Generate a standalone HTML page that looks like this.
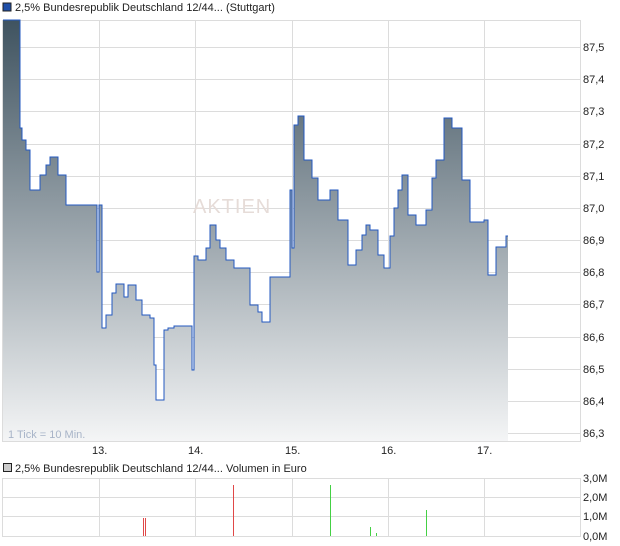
<!DOCTYPE html>
<html><head><meta charset="utf-8"><style>
body{margin:0;background:#fff;width:620px;height:546px;overflow:hidden;font-family:"Liberation Sans",sans-serif}
svg{position:absolute;left:0;top:0}
text{font-family:"Liberation Sans",sans-serif;font-size:11px;fill:#222}
</style></head><body>
<svg width="620" height="546" viewBox="0 0 620 546">
<defs><linearGradient id="g" x1="0" y1="20" x2="0" y2="441" gradientUnits="userSpaceOnUse">
<stop offset="0" stop-color="#3f5360"/><stop offset="1" stop-color="#f4f5f6"/></linearGradient></defs>
<rect x="3" y="3" width="8" height="8" fill="#1f4fa8" stroke="#222" stroke-width="1"/>
<text x="15" y="11">2,5% Bundesrepublik Deutschland 12/44... (Stuttgart)</text>
<g stroke="#dcdcdc" stroke-width="1" fill="none">
<rect x="2.5" y="20.5" width="578" height="421"/>
<path d="M99.5 20V441M195.5 20V441M292.5 20V441M388.5 20V441M484.5 20V441"/>
<path d="M2 47.5H580M2 79.5H580M2 111.5H580M2 144.5H580M2 176.5H580M2 208.5H580M2 240.5H580M2 272.5H580M2 304.5H580M2 337.5H580M2 369.5H580M2 401.5H580M2 433.5H580"/>
</g>
<text x="193" y="213" style="font-size:20px;fill:#e6dcd8;letter-spacing:1px">AKTIEN</text>
<path fill="url(#g)" d="M3 441V20H20V128H22V140H26V150H30V190H40V175H46V165H50V157H58V175H66V205H97V272H99V205H102V328H106V315H112V293H116V284H124V297H128V285H136V300H142V315H150V318H154V365H156V400H164V330H168V328H174V326H192V370H194V256H198V260H202V260H206V248H210V225H216V240H220V248H226V260H234V268H250V305H258V312H262V322H270V277H290V190H292V248H294V125H298V116H304V160H312V178H318V200H330V190H338V220H348V265H356V250H362V235H366V225H370V230H378V255H384V268H390V236H394V208H398V190H402V175H408V215H416V225H426V210H432V178H436V160H444V118H452V128H462V180H470V222H484V220H488V275H496V247H506V236H508V441Z"/>
<path fill="none" stroke="#2358c0" stroke-width="1" d="M3 20H20V128H22V140H26V150H30V190H40V175H46V165H50V157H58V175H66V205H97V272H99V205H102V328H106V315H112V293H116V284H124V297H128V285H136V300H142V315H150V318H154V365H156V400H164V330H168V328H174V326H192V370H194V256H198V260H202V260H206V248H210V225H216V240H220V248H226V260H234V268H250V305H258V312H262V322H270V277H290V190H292V248H294V125H298V116H304V160H312V178H318V200H330V190H338V220H348V265H356V250H362V235H366V225H370V230H378V255H384V268H390V236H394V208H398V190H402V175H408V215H416V225H426V210H432V178H436V160H444V118H452V128H462V180H470V222H484V220H488V275H496V247H506V236H508"/>
<text x="8" y="438" style="fill:#a8b4c8">1 Tick = 10 Min.</text>
<g style="font-size:11px">
<text x="583" y="51">87,5</text><text x="583" y="83">87,4</text><text x="583" y="115">87,3</text><text x="583" y="148">87,2</text><text x="583" y="180">87,1</text><text x="583" y="212">87,0</text><text x="583" y="244">86,9</text><text x="583" y="276">86,8</text><text x="583" y="308">86,7</text><text x="583" y="341">86,6</text><text x="583" y="373">86,5</text><text x="583" y="405">86,4</text><text x="583" y="437">86,3</text>
<text x="92" y="454">13.</text><text x="188" y="454">14.</text><text x="285" y="454">15.</text><text x="381" y="454">16.</text><text x="477" y="454">17.</text>
</g>
<rect x="3.5" y="463.5" width="8" height="8" fill="#ccc" stroke="#222"/>
<text x="15" y="472">2,5% Bundesrepublik Deutschland 12/44... Volumen in Euro</text>
<g stroke="#dcdcdc" fill="none">
<rect x="2.5" y="478.5" width="578" height="58"/>
<path d="M2 497.5H580M2 516.5H580M99.5 478V536M195.5 478V536M292.5 478V536M388.5 478V536M484.5 478V536"/>
</g>
<g stroke-width="1">
<path stroke="#e04848" d="M143.5 518V536M145.5 518V536M233.5 485V536"/>
<path stroke="#44d044" d="M330.5 485V536M370.5 527V536M376.5 533V536M426.5 510V536"/>
</g>
<text x="583" y="482">3,0M</text><text x="583" y="501">2,0M</text><text x="583" y="520">1,0M</text><text x="583" y="540">0,0M</text>
</svg>
</body></html>
